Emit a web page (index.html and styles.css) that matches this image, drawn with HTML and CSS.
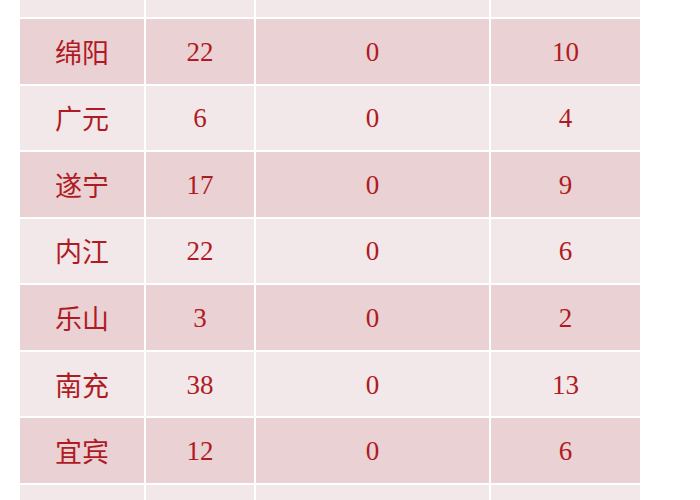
FILE: index.html
```html
<!DOCTYPE html>
<html lang="zh">
<head>
<meta charset="utf-8">
<link rel="stylesheet" href="styles.css">
</head>
<body>
<div class="table">
  <div class="row light"><div class="cell city"></div><div class="cell num"></div><div class="cell num"></div><div class="cell num"></div></div>
  <div class="row dark"><div class="cell city">绵阳</div><div class="cell num">22</div><div class="cell num">0</div><div class="cell num">10</div></div>
  <div class="row light"><div class="cell city">广元</div><div class="cell num">6</div><div class="cell num">0</div><div class="cell num">4</div></div>
  <div class="row dark"><div class="cell city">遂宁</div><div class="cell num">17</div><div class="cell num">0</div><div class="cell num">9</div></div>
  <div class="row light"><div class="cell city">内江</div><div class="cell num">22</div><div class="cell num">0</div><div class="cell num">6</div></div>
  <div class="row dark"><div class="cell city">乐山</div><div class="cell num">3</div><div class="cell num">0</div><div class="cell num">2</div></div>
  <div class="row light"><div class="cell city">南充</div><div class="cell num">38</div><div class="cell num">0</div><div class="cell num">13</div></div>
  <div class="row dark"><div class="cell city">宜宾</div><div class="cell num">12</div><div class="cell num">0</div><div class="cell num">6</div></div>
  <div class="row light short"><div class="cell city"></div><div class="cell num"></div><div class="cell num"></div><div class="cell num"></div></div>
</div>
</body>
</html>
```
FILE: styles.css
```css
html, body {
  margin: 0;
  padding: 0;
  background: #ffffff;
  height: 500px;
  overflow: hidden;
}
.table {
  display: grid;
  grid-template-rows: repeat(8, 64.57px) 20px;
  row-gap: 2px;
  width: 620px;
  margin-left: 20px;
  margin-top: -47.57px;
}
.row {
  display: grid;
  grid-template-columns: 124px 108px 233px 149px;
  column-gap: 2px;
}
.cell {
  display: flex;
  align-items: center;
  justify-content: center;
  color: #b01b23;
}
.light .cell { background: #f3e8e9; }
.dark .cell { background: #e9d1d4; }
.city {
  font-family: "Noto Sans CJK SC", "Noto Sans", sans-serif;
  font-size: 27px;
}
.num {
  font-family: "Liberation Serif", serif;
  font-size: 27px;
  padding-top: 2px;
}
```
